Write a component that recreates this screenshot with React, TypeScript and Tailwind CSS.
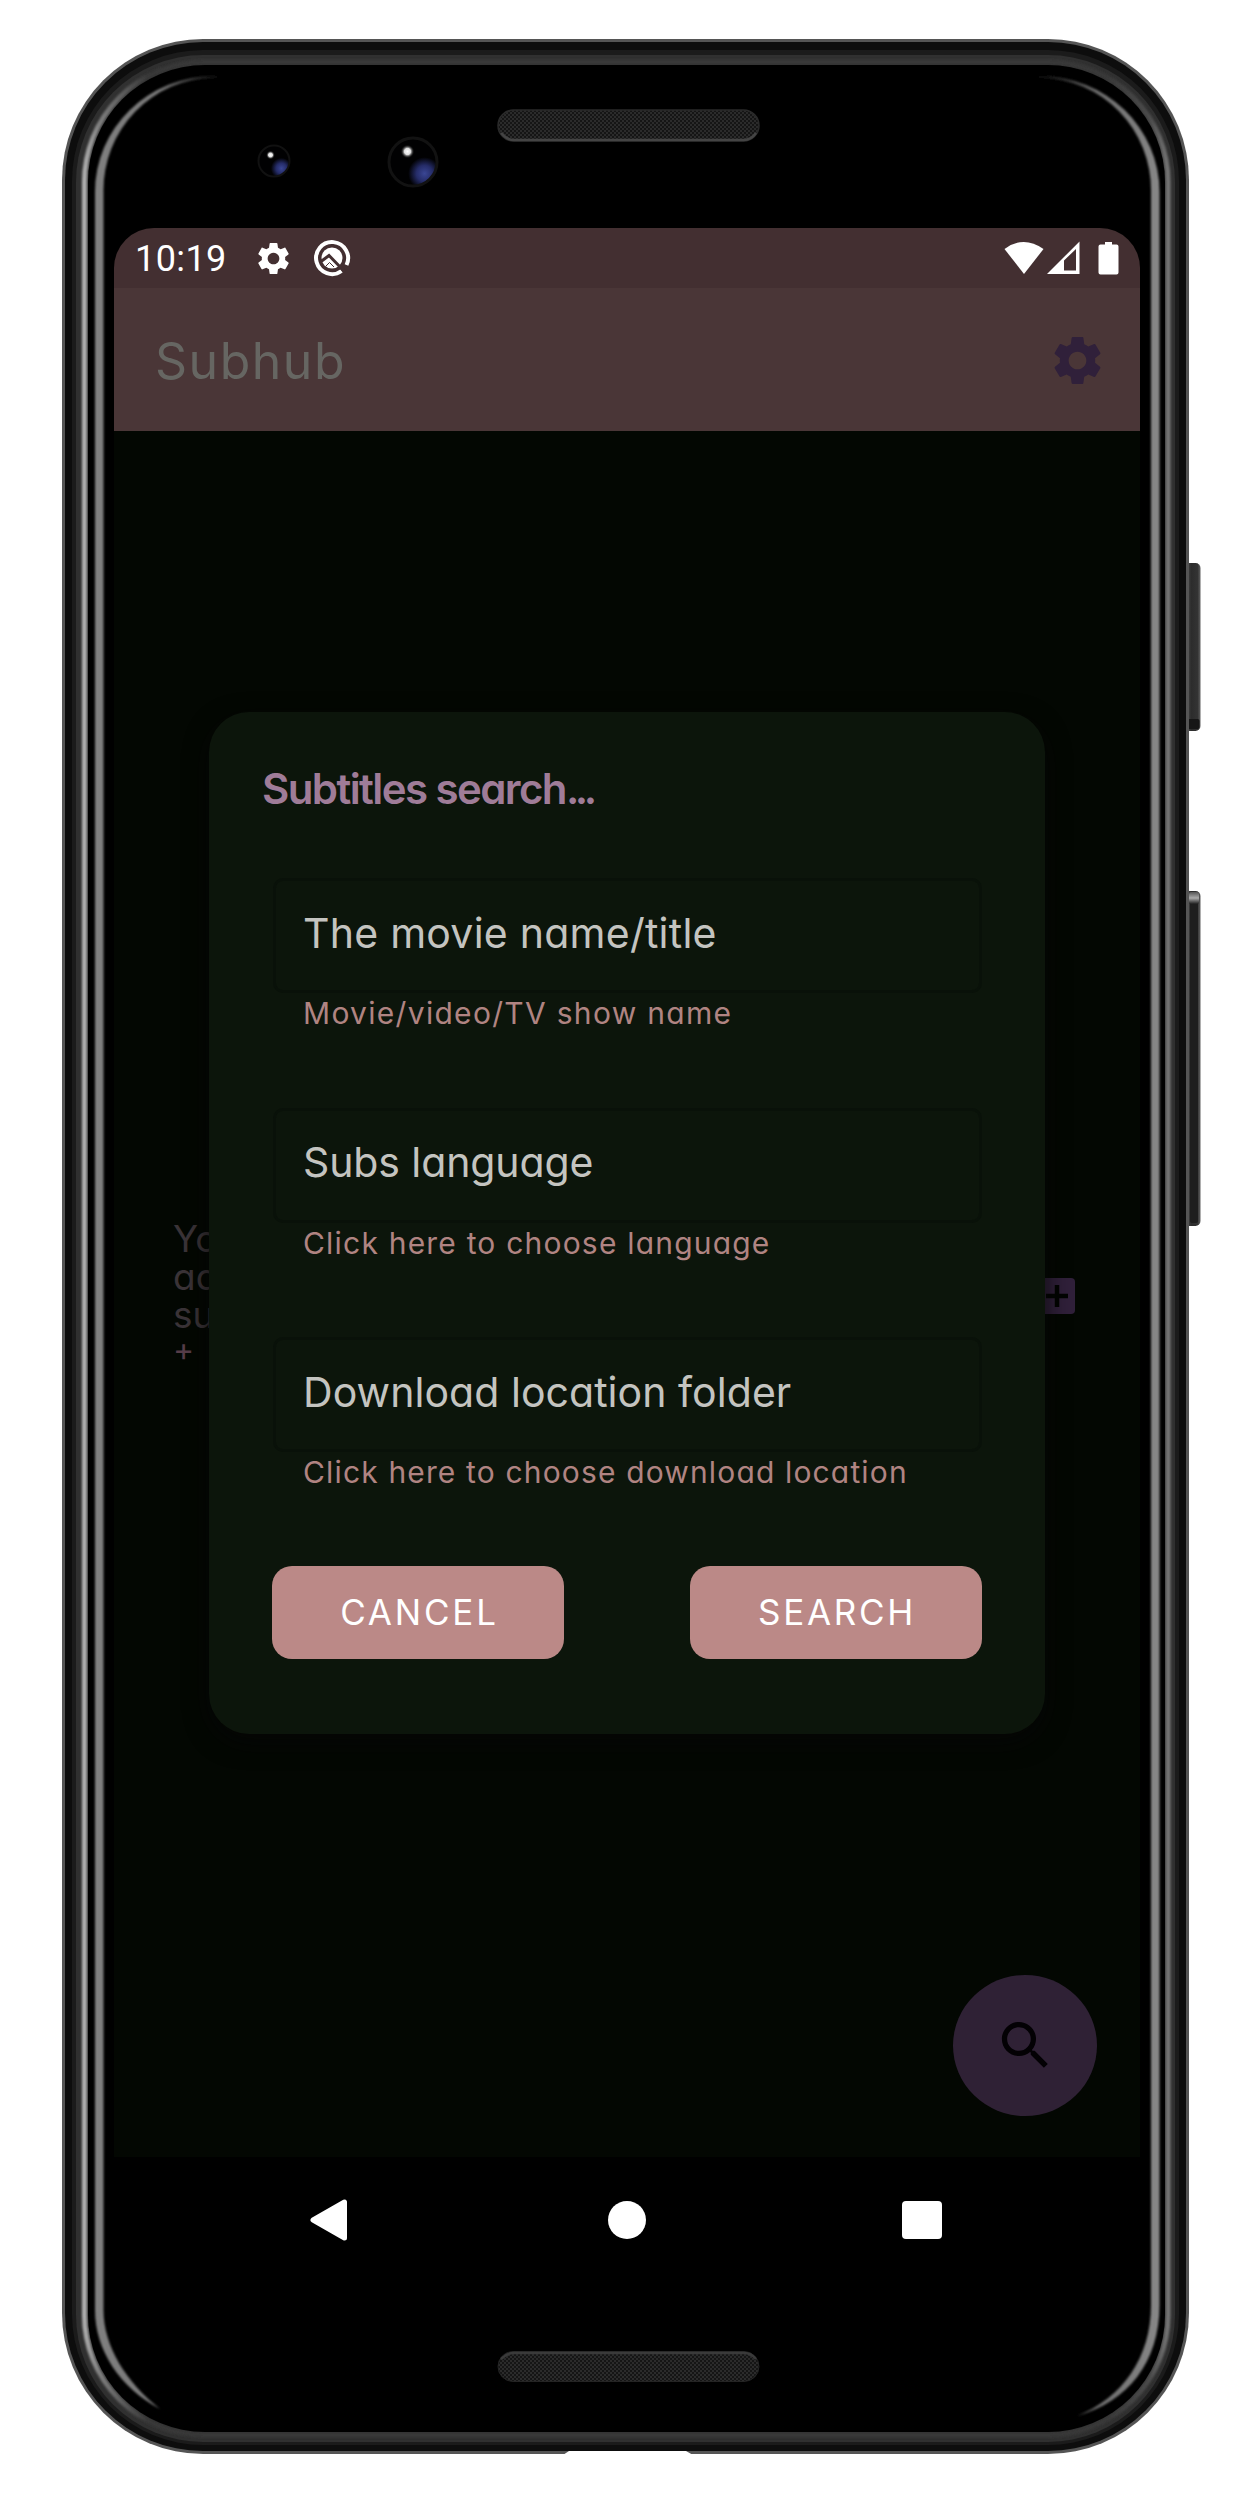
import React from "react";

const GEAR =
  "M19.14 12.94c.04-.3.06-.61.06-.94 0-.32-.02-.64-.07-.94l2.03-1.58c.18-.14.23-.41.12-.61l-1.92-3.32c-.12-.22-.37-.29-.59-.22l-2.39.96c-.5-.38-1.03-.7-1.62-.94l-.36-2.54c-.04-.24-.24-.41-.48-.41h-3.84c-.24 0-.43.17-.47.41l-.36 2.54c-.59.24-1.13.57-1.62.94l-2.39-.96c-.22-.08-.47 0-.59.22L2.74 8.87c-.12.21-.08.47.12.61l2.03 1.58c-.05.3-.09.63-.09.94s.02.64.07.94l-2.03 1.58c-.18.14-.23.41-.12.61l1.92 3.32c.12.22.37.29.59.22l2.39-.96c.5.38 1.03.7 1.62.94l.36 2.54c.05.24.24.41.48.41h3.84c.24 0 .44-.17.47-.41l.36-2.54c.59-.24 1.13-.56 1.62-.94l2.39.96c.22.08.47 0 .59-.22l1.92-3.32c.12-.22.07-.47-.12-.61l-2.01-1.58zM12 15.6c-1.98 0-3.6-1.62-3.6-3.6s1.62-3.6 3.6-3.6 3.6 1.62 3.6 3.6-1.62 3.6-3.6 3.6z";

function Gear({ className }: { className: string }) {
  return (
    <svg viewBox="0 0 24 24" className={className} fill="currentColor">
      <path d={GEAR} />
    </svg>
  );
}

/* Hardware artwork: body, bevel highlights, side keys, cameras and speakers. */
function DeviceFrame() {
  return (
    <svg className="absolute inset-0" width="1254" height="2508" viewBox="0 0 1254 2508" fill="none">
      <defs>
        <linearGradient id="bevel" gradientUnits="userSpaceOnUse" x1="82" y1="0" x2="1172" y2="0">
          <stop offset="0" stopColor="#b4b4b4" />
          <stop offset="0.015" stopColor="#808080" />
          <stop offset="0.06" stopColor="#383838" />
          <stop offset="0.94" stopColor="#383838" />
          <stop offset="0.98" stopColor="#4c4c4c" />
          <stop offset="1" stopColor="#7c7c7c" />
        </linearGradient>
        <linearGradient id="glintL" gradientUnits="userSpaceOnUse" x1="95" y1="0" x2="224" y2="0">
          <stop offset="0" stopColor="#808080" />
          <stop offset="0.5" stopColor="#787878" />
          <stop offset="1" stopColor="#000" />
        </linearGradient>
        <linearGradient id="glintR" gradientUnits="userSpaceOnUse" x1="1160" y1="0" x2="1034" y2="0">
          <stop offset="0" stopColor="#888" />
          <stop offset="0.5" stopColor="#6c6c6c" />
          <stop offset="1" stopColor="#000" />
        </linearGradient>
        <linearGradient id="key" gradientUnits="userSpaceOnUse" x1="1187" y1="0" x2="1201" y2="0">
          <stop offset="0" stopColor="#4a4a4a" />
          <stop offset="0.3" stopColor="#2c2c2c" />
          <stop offset="0.75" stopColor="#333" />
          <stop offset="1" stopColor="#666" />
        </linearGradient>
        <linearGradient id="keyTop" x1="0" y1="0" x2="0" y2="1">
          <stop offset="0" stopColor="#555" />
          <stop offset="0.5" stopColor="#aaa" />
          <stop offset="1" stopColor="#1e1e1e" />
        </linearGradient>
        <radialGradient id="lens" cx="0.74" cy="0.74" r="0.34">
          <stop offset="0" stopColor="#3a4694" />
          <stop offset="0.5" stopColor="#252c68" />
          <stop offset="1" stopColor="#010102" />
        </radialGradient>
        <radialGradient id="spark">
          <stop offset="0" stopColor="#fff" />
          <stop offset="0.45" stopColor="#ddd" />
          <stop offset="1" stopColor="#000" stopOpacity="0" />
        </radialGradient>
        <filter id="soft" filterUnits="userSpaceOnUse" x="60" y="40" width="1130" height="2410">
          <feGaussianBlur stdDeviation="1" />
        </filter>
        <pattern id="mesh" width="4" height="4" patternUnits="userSpaceOnUse">
          <rect width="4" height="4" fill="#2b2b2b" />
          <rect width="2" height="2" fill="#151515" />
          <rect x="2" y="2" width="2" height="2" fill="#151515" />
        </pattern>
      </defs>

      <rect x="1180" y="563" width="20.5" height="168" rx="5" fill="url(#key)" />
      <rect x="1180" y="719" width="19.5" height="10" rx="2" fill="#161616" />
      <rect x="1180" y="891" width="20.5" height="335" rx="5" fill="url(#key)" />
      <rect x="1190" y="893" width="8" height="330" rx="2" fill="#1e1e1e" />
      <rect x="1189" y="892" width="10" height="12" rx="2" fill="url(#keyTop)" />

      <rect x="62" y="39" width="1127" height="2415" rx="141" fill="#555" />
      <rect x="65" y="42" width="1121" height="2409" rx="138" fill="#0d0d0d" />
      <rect x="72" y="50" width="1107" height="2395" rx="131" fill="#1b1b1b" />
      <rect x="76" y="55" width="1099" height="2387" rx="127" fill="#303030" />
      <rect x="84.500" y="62" width="1083.500" height="2373" rx="120" stroke="url(#bevel)" strokeWidth="5" filter="url(#soft)" />
      <rect x="88" y="65" width="1077" height="2367" rx="117" fill="#000" />
      <g filter="url(#soft)">
        <path
          d="M224 76H214A119 116 0 0 0 95 192V2310C95 2350 120 2388 160 2409C126 2382 103.500 2346 103.500 2310V192A111 112 0 0 1 214 78Z"
          fill="url(#glintL)"
        />
        <path
          d="M1034 76H1040A119 116 0 0 1 1159.500 192V2305C1159.500 2362 1128 2402 1077 2416C1122 2398 1151 2358 1151 2305V192A111 112 0 0 0 1040 78Z"
          fill="url(#glintR)"
        />
      </g>
      <path d="M563 2455L569 2451H686L693 2455Z" fill="#fff" />

      <rect x="498" y="110" width="261" height="31" rx="15.500" fill="url(#mesh)" stroke="#2a2a2a" strokeWidth="1.500" />
      <path d="M501 133Q507 140 514 140H744Q751 140 756 133" stroke="#444" strokeWidth="2.500" />
      <rect x="498" y="2351.500" width="261" height="30" rx="15" fill="url(#mesh)" stroke="#242424" strokeWidth="1" />
      <path d="M501 2359Q507 2353 514 2353H744Q751 2353 756 2359" stroke="#3a3a3a" strokeWidth="2.500" />

      <circle cx="274" cy="161" r="15.500" fill="url(#lens)" stroke="#111" strokeWidth="2" />
      <circle cx="270.500" cy="155" r="4.500" fill="url(#spark)" />
      <circle cx="413" cy="162" r="24" fill="url(#lens)" stroke="#121212" strokeWidth="3" />
      <circle cx="407.500" cy="151.500" r="7" fill="url(#spark)" />
    </svg>
  );
}

function StatusBar() {
  return (
    <div className="flex h-[60px] items-center bg-[#432f31] pl-[21px] text-white">
      <span className="w-[92px] pt-[3px] font-['Roboto',sans-serif] text-[36px] leading-[57px] tracking-[0.400px]">10:19</span>
      <Gear className="ml-[27px] size-[39px]" />
      <svg viewBox="0 0 40 40" className="ml-[19px] size-[40px]" fill="none">
        <path d="M29.500 33A16 16 0 1 1 34.500 27" stroke="#fff" strokeWidth="4" />
        <circle cx="20" cy="20" r="10.500" fill="#fff" />
        <path d="M9 23.500L17 17.500L33 34" stroke="#432f31" strokeWidth="3" />
        <path d="M14 28L17.500 24.500L22 29" stroke="#432f31" strokeWidth="1" />
      </svg>
      <svg viewBox="0 0 116 34" className="mr-5 ml-auto h-[34px] w-[116px]" fill="#fff">
        <path d="M0.500 8Q19.500 -6 39.500 8L20 33Z" />
        <path fillRule="evenodd" d="M43 33L75.500 0.500V33ZM60 19.500V29.500H72V8Z" />
        <path d="M101 1H108V3.500H112.500Q114.500 3.500 114.500 5.500V31.500Q114.500 33.500 112.500 33.500H96.500Q94.500 33.500 94.500 31.500V5.500Q94.500 3.500 96.500 3.500H101Z" />
      </svg>
    </div>
  );
}

type FieldProps = { label: string; hint: string; labelClass: string; hintClass: string };

function Field({ label, hint, labelClass, hintClass }: FieldProps) {
  return (
    <div className="h-[229.500px]">
      <div className="flex h-[115px] items-center rounded-[10px] border-[3px] border-[#091109] pb-[6px] pl-[27px]">
        <span className={`whitespace-nowrap text-[41px] leading-[50px] text-[#c4c4c0] ${labelClass}`}>{label}</span>
      </div>
      <div className={`pl-[30px] text-[30px] leading-[40px] whitespace-nowrap text-[#b08482] ${hintClass}`}>{hint}</div>
    </div>
  );
}

function SearchDialog() {
  return (
    <section className="absolute top-[281px] left-[95px] h-[1022px] w-[836px] rounded-[40px] bg-[#0c150b] px-[63px] pt-[51px] shadow-[0_8px_24px_rgba(5,5,5,0.9)]">
      <h2 className="-ml-[10px] pt-px text-[42px] leading-[50px] font-semibold tracking-[-1.600px] whitespace-nowrap text-[#9f7c98]">
        Subtitles search<span className="tracking-[-4.500px]">...</span>
      </h2>
      <div className="mt-[64px] pl-px">
        <Field label="The movie name/title" hint="Movie/video/TV show name" labelClass="tracking-[0.250px]" hintClass="tracking-[1.300px]" />
        <Field label="Subs language" hint="Click here to choose language" labelClass="tracking-[-0.100px]" hintClass="tracking-[1.200px]" />
        <Field label="Download location folder" hint="Click here to choose download location" labelClass="tracking-[0.050px]" hintClass="tracking-[1.150px]" />
      </div>
      <div className="-mt-px flex justify-between">
        <button className="h-[93px] w-[292px] rounded-[20px] bg-[#bb8987] pl-[3px] text-[35px] tracking-[2.800px] text-white">CANCEL</button>
        <button className="h-[93px] w-[292px] rounded-[20px] bg-[#bb8987] pl-[2px] text-[35px] tracking-[2.700px] text-white">SEARCH</button>
      </div>
    </section>
  );
}

export default function App() {
  return (
    <div className="relative h-[2508px] w-[1254px] overflow-hidden bg-white pt-[228px] pl-[114px] font-['Inter',sans-serif] [font-feature-settings:'cv11','ss03']">
      <DeviceFrame />
      <main className="relative w-[1026px] overflow-hidden rounded-t-[40px]">
        <StatusBar />
        <header className="flex h-[143px] items-center justify-between bg-[#4a3637] pr-[33px] pl-[41px]">
          <h1 className="pt-[3px] text-[50px] leading-[60px] tracking-[1.500px] text-[#666662]">Subhub</h1>
          <Gear className="mt-px size-[59px] text-[#30203a]" />
        </header>
        <div className="relative h-[1726px] bg-[#030702]">
          <div className="flex items-center justify-between pt-[789px] pr-[65px] pl-[59px]">
            <div className="w-[60px] text-[37px] leading-[38px] text-[#3a3337]">
              <p>You</p>
              <p>add</p>
              <p>sub</p>
              <p className="-mt-[3px] pb-[3px] text-[32px] text-[#573d49]">+</p>
            </div>
            <svg viewBox="0 0 36 36" className="size-[36px]">
              <rect width="36" height="36" rx="4" fill="#30203a" />
              <path d="M18 7V29M7 18H29" stroke="#020402" strokeWidth="4.500" />
            </svg>
          </div>
          <SearchDialog />
          <button className="absolute top-[1544px] left-[839px] flex h-[141px] w-[144px] items-center justify-center rounded-[50%] bg-[#2f2135]">
            <svg viewBox="0 0 24 24" className="size-[63px]" fill="#030104">
              <path d="M15.500 14h-.79l-.28-.27C15.410 12.590 16 11.110 16 9.500 16 5.910 13.090 3 9.500 3S3 5.910 3 9.500 5.910 16 9.500 16c1.610 0 3.090-.59 4.230-1.570l.27.280v.790l5 4.990L20.490 19l-4.990-5zm-6 0C7.010 14 5 11.990 5 9.500S7.010 5 9.500 5 14 7.010 14 9.500 11.990 14 9.500 14z" />
            </svg>
          </button>
        </div>
        <nav className="flex h-[125px] items-center justify-between bg-black pr-[198px] pl-[196px]">
          <svg viewBox="0 0 38 44" className="h-[44px] w-[38px]">
            <path d="M3 22L34.500 4V40Z" fill="#fff" stroke="#fff" strokeWidth="5" strokeLinejoin="round" />
          </svg>
          <span className="ml-[3px] size-[38px] rounded-full bg-white" />
          <span className="h-[38px] w-[40px] rounded-[4px] bg-white" />
        </nav>
      </main>
    </div>
  );
}
